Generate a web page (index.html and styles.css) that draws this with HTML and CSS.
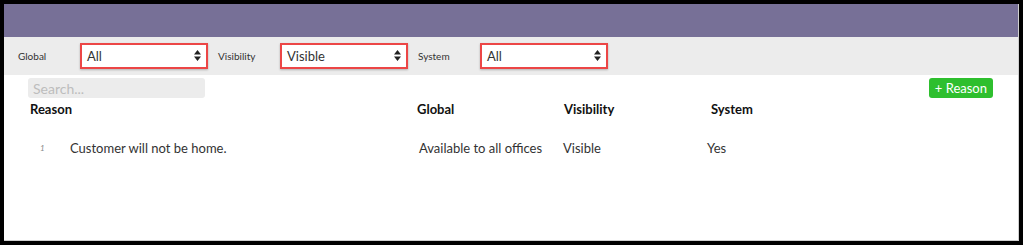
FILE: index.html
```html
<!DOCTYPE html>
<html lang="en">
  <head>
    <meta charset="UTF-8" />
    <title>Reasons</title>
    <link rel="stylesheet" href="styles.css">
  </head>
  <body>
    <div class="frame">
      <div class="topbar"></div>
      <div class="filters">
        <label class="filter-label">Global</label>
        <div class="select">
          <span>All</span>
          <svg class="arrows" width="7" height="11" viewBox="0 0 7 11"><path d="M3.5 0L7 4.5H0Z M3.5 11L7 6.5H0Z" fill="#222"/></svg>
        </div>
        <label class="filter-label">Visibility</label>
        <div class="select">
          <span>Visible</span>
          <svg class="arrows" width="7" height="11" viewBox="0 0 7 11"><path d="M3.5 0L7 4.5H0Z M3.5 11L7 6.5H0Z" fill="#222"/></svg>
        </div>
        <label class="filter-label">System</label>
        <div class="select">
          <span>All</span>
          <svg class="arrows" width="7" height="11" viewBox="0 0 7 11"><path d="M3.5 0L7 4.5H0Z M3.5 11L7 6.5H0Z" fill="#222"/></svg>
        </div>
      </div>
      <div class="content">
        <div class="toolbar">
          <input class="search" type="text" placeholder="Search..." />
          <button class="add">+ Reason</button>
        </div>
        <div class="table">
          <div class="row head">
            <div class="first">Reason</div>
            <div>Global</div>
            <div>Visibility</div>
            <div>System</div>
          </div>
          <div class="row item">
            <div class="reason"><span class="num">1</span>Customer will not be home.</div>
            <div>Available to all offices</div>
            <div>Visible</div>
            <div>Yes</div>
          </div>
        </div>
      </div>
    </div>
  </body>
</html>
```

FILE: styles.css
```css
body {
  margin: 0;
  background-color: #000;
  font-family: Lato, "Open Sans", Arial, sans-serif;
  color: #333;
}
.frame {
  margin: 4px;
  width: 1014px;
  height: 236px;
  background-color: white;
  border-right: 1px solid #cfcfcf;
  border-bottom: 1px solid #cfcfcf;
}
.topbar {
  height: 33px;
  background-color: #777097;
}
.filters {
  height: 38px;
  background-color: #ececec;
  display: flex;
  align-items: center;
  padding-left: 14px;
}
.filter-label {
  font-size: 10px;
  color: #333;
  width: 62px;
}
.select {
  box-sizing: border-box;
  width: 128px;
  height: 26px;
  background-color: white;
  border: 2px solid #ec4646;
  box-shadow: 0 1px 2px rgba(0, 0, 0, 0.25);
  display: flex;
  align-items: center;
  justify-content: space-between;
  padding: 0 5px 0 5px;
  font-size: 13px;
  color: #333;
  margin-right: 10px;
  margin-top: -1px;
}
.content {
  padding: 3px 25px 0 24px;
}
.toolbar {
  display: flex;
  justify-content: space-between;
  align-items: center;
}
.search {
  width: 177px;
  height: 20px;
  box-sizing: border-box;
  border: none;
  border-radius: 3px;
  background-color: #ececec;
  font-family: inherit;
  font-size: 14px;
  padding: 0 5px;
}
.search::placeholder {
  color: #bdbdbd;
}
.add {
  background-color: #2ebf2e;
  color: white;
  border: none;
  border-radius: 3px;
  font-family: inherit;
  font-size: 13px;
  height: 20px;
  padding: 0 6px;
}
.row {
  display: grid;
}
.head {
  grid-template-columns: 389px 147px 147px 1fr;
  font-weight: bold;
  font-size: 13px;
  color: #111;
  padding-top: 3px;
}
.head .first {
  padding-left: 2px;
}
.item {
  grid-template-columns: 391px 144px 144px 1fr;
  font-size: 13px;
  color: #333;
  padding-top: 23px;
}
.reason {
  display: flex;
  align-items: center;
}
.num {
  font-size: 8px;
  font-style: italic;
  color: #888;
  width: 42px;
  padding-left: 12px;
  box-sizing: border-box;
}
```
